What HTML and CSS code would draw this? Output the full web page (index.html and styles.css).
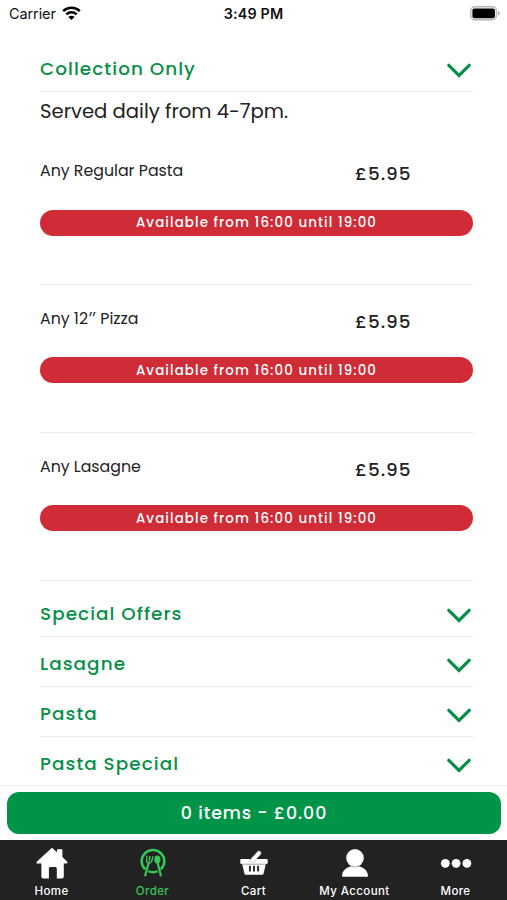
FILE: index.html
```html
<!DOCTYPE html>
<html lang="en">
<head>
<meta charset="utf-8">
<meta name="viewport" content="width=device-width, initial-scale=1">
<title>Order</title>
<link rel="stylesheet" href="styles.css">
</head>
<body>
<svg class="defs" aria-hidden="true"><symbol id="chevron" viewBox="0 0 24 16"><path d="M1.8 2.3 12 12.5 22.2 2.3" fill="none" stroke="currentColor" stroke-width="3.2" stroke-linecap="round" stroke-linejoin="miter"/></symbol></svg>
<div class="app">
  <header class="status">
    <div class="carrier"><span>Carrier</span>
      <svg width="19" height="15" viewBox="0 0 19 15" fill="none" stroke="#000" stroke-width="2.5"><path d="M1.2 5.2C5.8.7 13.2.7 17.8 5.2M4.3 8.4C7.3 5.6 11.7 5.6 14.7 8.4"/><path d="M9.5 14 6.4 10.9C8.2 9.3 10.8 9.3 12.6 10.9Z" fill="#000" stroke="none"/></svg>
    </div>
    <time>3:49 PM</time>
    <svg class="battery" width="31" height="15" viewBox="0 0 31 15"><rect x=".8" y=".8" width="25.6" height="13" rx="4" fill="#fff" stroke="#b5b5b5" stroke-width="1.4"/><rect x="2.4" y="2.4" width="22.5" height="9.8" rx="2" fill="#000"/><path d="M28 5v4.8c2.2-.8 2.2-4 0-4.8Z" fill="#aaa"/></svg>
  </header>
  <main class="menu">
    <h2 class="category"><span>Collection Only</span><svg><use href="#chevron"/></svg></h2>
    <p class="served">Served daily from 4-7pm.</p>
    <article class="item first"><div class="info"><h3>Any Regular Pasta</h3><span class="price">£5.95</span></div><div class="hours">Available from 16:00 until 19:00</div></article>
    <article class="item"><div class="info"><h3>Any 12<i>″</i> Pizza</h3><span class="price">£5.95</span></div><div class="hours">Available from 16:00 until 19:00</div></article>
    <article class="item"><div class="info"><h3>Any Lasagne</h3><span class="price">£5.95</span></div><div class="hours">Available from 16:00 until 19:00</div></article>
    <h2 class="category spaced"><span>Special Offers</span><svg><use href="#chevron"/></svg></h2>
    <h2 class="category"><span>Lasagne</span><svg><use href="#chevron"/></svg></h2>
    <h2 class="category"><span>Pasta</span><svg><use href="#chevron"/></svg></h2>
    <h2 class="category last"><span>Pasta Special</span><svg><use href="#chevron"/></svg></h2>
  </main>
  <div class="basket"><button>0 items - £0.00</button></div>
  <nav class="tabs">
    <a><svg width="32" height="32" viewBox="0 0 32 32" fill="currentColor"><path d="M15.2 1.4c.5-.5 1.1-.5 1.6 0l4.2 3.8V3.3c0-.7.4-1.1 1.1-1.1h3.2c.7 0 1.1.4 1.1 1.1v6.8l4.4 4.2c1.3 1.3.7 2.3-1 2.3h-2v13c0 1.2-.7 1.9-1.9 1.9h-5.1v-9.7c0-1.2-.6-1.8-1.8-1.8h-4.3c-1.2 0-1.8.6-1.8 1.8v9.7H7.3c-1.2 0-1.9-.7-1.9-1.9v-13H2c-1.7 0-2-1.1-.8-2.3Z"/></svg><span>Home</span></a>
    <a class="active"><svg width="28" height="32" viewBox="0 0 28 32"><path d="M6.2 22.4A11.3 11.3 0 1 1 21.8 22.4M9.4 24.2a11.3 11.3 0 0 0 9.2 0" fill="none" stroke="currentColor" stroke-width="2.5"/><g fill="none" stroke="currentColor" stroke-linecap="round"><path d="M9.7 16 6.2 28.4M18.7 16 21.8 28.4" stroke-width="2.2"/><path d="M8.1 9.2 7.6 13c-.3 3.3 4.4 4 5.3.8l.9-4M11 9.4l-.7 4.4" stroke-width="1.4"/></g><ellipse cx="18.4" cy="12.5" rx="3.1" ry="4" fill="currentColor"/></svg><span>Order</span></a>
    <a><svg width="30" height="32" viewBox="0 0 30 32"><path d="M2.4 12h25.2c.7 0 1.1.4 1.1 1.1v2.7c0 .7-.4 1.1-1.1 1.1h-.8l-2.2 9.6c-.2.9-.8 1.3-1.6 1.3H7c-.8 0-1.4-.4-1.6-1.3l-2.2-9.6h-.8c-.7 0-1.1-.4-1.1-1.1v-2.7c0-.7.4-1.1 1.1-1.1Z" fill="currentColor"/><path d="M3.4 17.2h23.2" stroke="#777" stroke-width=".7"/><path d="m13.3 13 6.6-7" stroke="#555" stroke-width="5" stroke-linecap="round"/><path d="m13.2 13.6 6.8-7.4" stroke="currentColor" stroke-width="4" stroke-linecap="round"/><path d="M10.9 18.8v5.8M15 18.8v5.8M19.1 18.8v5.8" stroke="#272727" stroke-width="1.9"/></svg><span>Cart</span></a>
    <a><svg width="30" height="32" viewBox="0 0 30 32" fill="currentColor"><ellipse cx="15" cy="11" rx="8.8" ry="9"/><path d="M2 28.7C2.4 23 7 20.5 11 19.2c2.8 1.5 5.2 1.5 8 0 4 1.3 8.6 3.8 9 9.5 0 .7-.4 1.1-1.1 1.1H3.1c-.7 0-1.1-.4-1.1-1.1Z"/></svg><span>My Account</span></a>
    <a><svg width="32" height="32" viewBox="0 0 32 32" fill="currentColor"><circle cx="5.3" cy="16.3" r="4.4"/><circle cx="16.1" cy="16.3" r="4.4"/><circle cx="26.9" cy="16.3" r="4.4"/></svg><span>More</span></a>
  </nav>
</div>
</body>
</html>
```
FILE: styles.css
```css
* { box-sizing: border-box; }
body { margin: 0; background: #fff; color: #222; font-family: Poppins, Inter, "Open Sans", sans-serif; }
h2, h3, p { margin: 0; font-weight: 400; }
.defs { position: absolute; width: 0; height: 0; }
.app { display: flex; flex-direction: column; height: 900px; overflow: hidden; }
.status { display: grid; grid-template-columns: 1fr auto 1fr; align-items: center; height: 28px; padding: 0 6px 0 9px; color: #111; font: 14.5px/20px Inter, sans-serif; flex: none; }
.carrier { display: flex; align-items: center; gap: 6px; letter-spacing: -.1px; }
.carrier svg { margin-top: -2px; }
.status time { margin-left: -3px; font-weight: 600; font-size: 14.3px; letter-spacing: .2px; }
.battery { justify-self: end; margin-top: -1px; }
.menu { flex: none; height: 757px; padding: 14px 34px 0 40px; overflow: hidden; }
.category { display: flex; align-items: center; justify-content: space-between; height: 50px; padding-top: 5px; border-bottom: 1px solid #ececec; color: #078f48; font-size: 18.4px; font-weight: 500; line-height: 28px; letter-spacing: 1.05px; }
.category svg { width: 24px; height: 16px; margin-right: 2px; margin-top: 3px; }
.category.spaced { height: 56px; padding-top: 11px; }
.category.last { border: 0; padding-top: 4px; }
.served { height: 44px; padding-top: 5px; font-size: 19.6px; line-height: 28px; }
.item { height: 148px; padding-top: 20px; border-bottom: 1px solid #ececec; }
.item.first { height: 149px; padding-top: 22px; }
.info { display: grid; grid-template-columns: 315px 1fr; height: 52px; padding-top: 2px; }
.first .info { padding-top: 1px; }
.info h3 { font-size: 15.8px; line-height: 24px; }
.info i { margin-right: 1px; }
.price { padding-top: 2px; font-size: 18.4px; font-weight: 500; line-height: 26px; letter-spacing: 1px; }
.hours { height: 26px; border-radius: 13px; background: #cf2c38; color: #fff; text-align: center; font-size: 13.4px; font-weight: 500; line-height: 27px; letter-spacing: 1.1px; }
.first .hours { line-height: 25px; }
.basket { flex: none; height: 55px; border-top: 1px solid #eee; padding: 6px 6px 6px 7px; }
.basket button { display: block; width: 100%; height: 42px; padding: 0; border: 0; border-radius: 12px; background: #009448; color: #fff; font: 500 17.4px/40px Poppins, Inter, sans-serif; letter-spacing: .9px; }
.tabs { flex: none; display: grid; grid-template-columns: repeat(5, 1fr); height: 60px; background: #222; color: #fff; padding: 7px 1px 0; }
.tabs a { display: flex; flex-direction: column; align-items: center; font: 500 11.5px/16px Inter, sans-serif; letter-spacing: .4px; }
.tabs span { margin-top: 4px; white-space: nowrap; }
.tabs .active { color: #35c759; }
```
